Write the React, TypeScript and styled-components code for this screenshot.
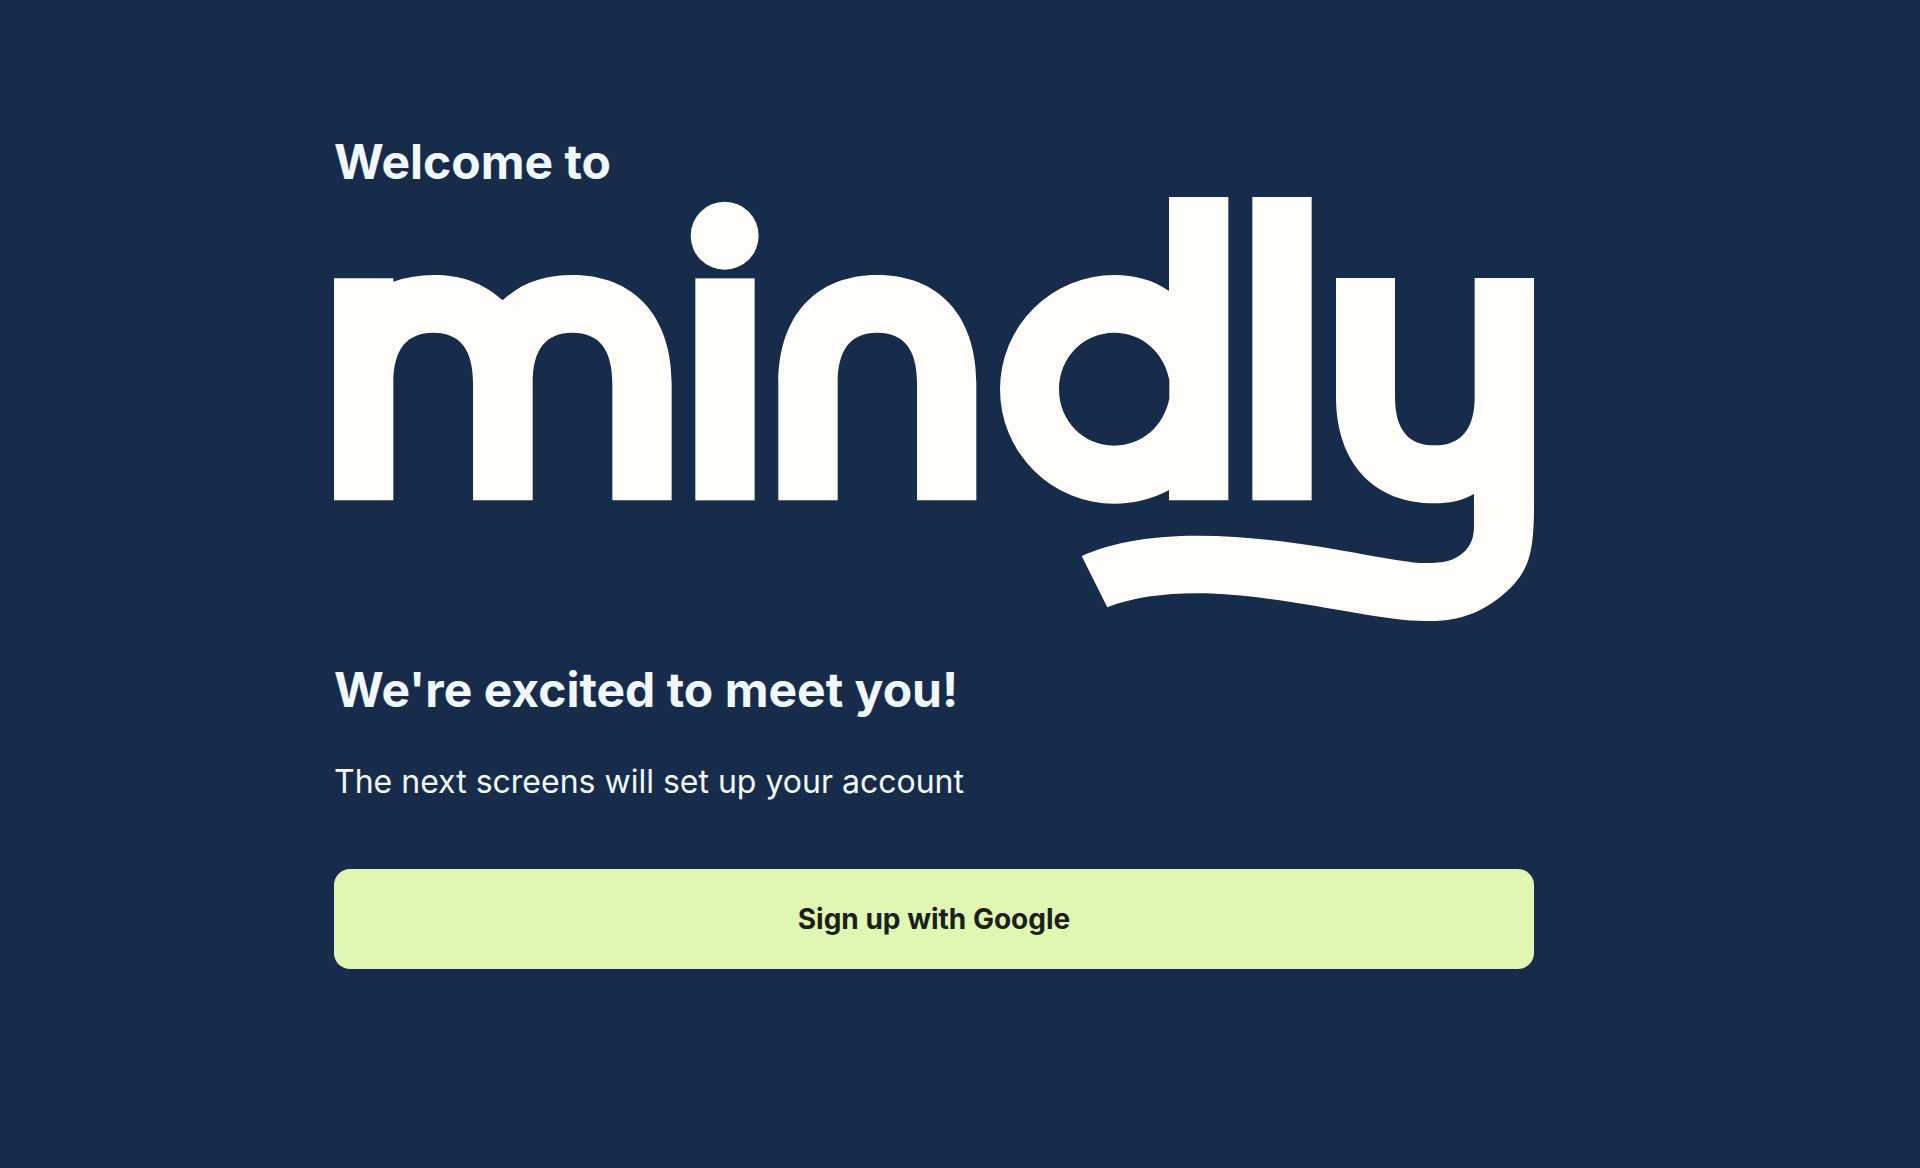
import React from "react";
import styled, { createGlobalStyle } from "styled-components";

const GlobalStyle = createGlobalStyle`
  * {
    box-sizing: border-box;
  }

  body {
    margin: 0;
    background: #172c4a;
    color: #f0f7ff;
    font-family: Inter, "Liberation Sans", sans-serif;
  }
`;

const Page = styled.main`
  display: flex;
  justify-content: center;
  min-height: 100vh;
  padding: 132px 76px 132px 24px;
`;

const Welcome = styled.section`
  display: flex;
  flex-direction: column;
  width: 100%;
  max-width: 1200px;
`;

const Title = styled.h1`
  margin: 0;
  font-size: 48px;
  font-weight: 700;
  line-height: 60px;
`;

const Logo = styled.svg`
  display: block;
  width: 100%;
  height: auto;
  margin: 5px 0 39px;
  fill: #fffdf9;
`;

const Subtitle = styled(Title).attrs({ as: "h2" })``;

const Lead = styled.p`
  margin: 40px 0 65px;
  font-size: 32px;
  line-height: 44px;
`;

const SignUpButton = styled.button`
  width: 100%;
  padding: 32px;
  border: 0;
  border-radius: 16px;
  background: #dff7b2;
  color: #1c2018;
  font-family: inherit;
  font-size: 28px;
  font-weight: 700;
  line-height: 36px;
  cursor: pointer;
`;

function MindlyLogo() {
  return (
    <Logo viewBox="0 0 3600 1272" role="img" aria-label="mindly">
      <path d="M0 244H178V254Q236 234 298 234C380 234 448 257 506 310C562 257 632 234 715 234C897 234 1013 354 1013 559V910H835V559C835 457 795 407 715 407S596 457 596 559V910H417V559C417 457 378 407 298 407S178 457 178 559V910H0Z" />
      <circle cx="1172" cy="116" r="102" />
      <rect x="1084" y="244" width="178" height="666" />
      <path d="M1333 910V559C1333 354 1448 234 1630 234S1927 354 1927 559V910H1749V559C1749 457 1710 407 1630 407S1511 457 1511 559V910Z" />
      <path
        fillRule="evenodd"
        d="M2505 0H2683V910H2505V879C2455 906 2400 920 2341 920A343 343 0 0 1 2341 234C2403 234 2458 249 2505 282ZM2506 549C2490 465 2423 407 2341 407C2248 407 2175 482 2175 577S2248 746 2341 746C2423 746 2490 688 2506 604Z"
      />
      <rect x="2755" y="0" width="178" height="910" />
      <path d="M3006 243H3183V599C3183 697 3222 745 3302 745S3422 695 3422 599V243H3600V925C3600 1065 3585 1117 3530 1172C3460 1240 3385 1272 3290 1272H3273C3122 1272 2830 1189 2590 1189C2485 1189 2395 1202 2320 1231L2243 1077C2335 1035 2455 1016 2590 1016C2890 1016 3169 1098 3273 1098C3330 1098 3360 1092 3390 1065C3411 1044 3420 1020 3420 989V891C3385 911 3345 919 3302 919C3120 919 3006 799 3006 599Z" />
    </Logo>
  );
}

export default function App() {
  return (
    <>
      <GlobalStyle />
      <Page>
        <Welcome>
          <Title>Welcome to</Title>
          <MindlyLogo />
          <Subtitle>We're excited to meet you!</Subtitle>
          <Lead>The next screens will set up your account</Lead>
          <SignUpButton type="button">Sign up with Google</SignUpButton>
        </Welcome>
      </Page>
    </>
  );
}
